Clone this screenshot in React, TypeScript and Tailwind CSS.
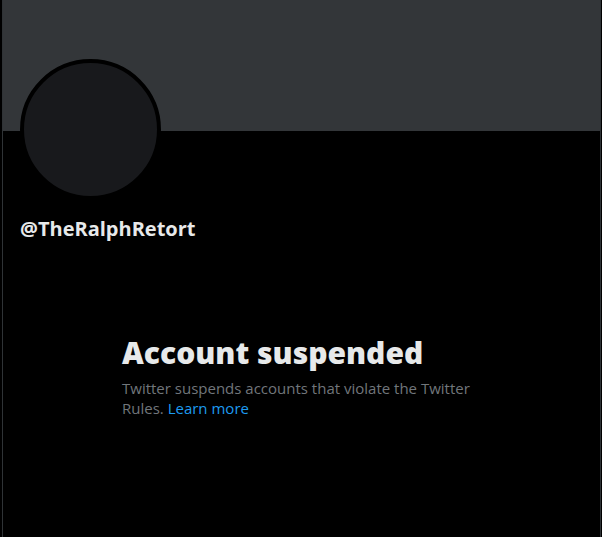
export default function App() {
  return (
    <div className="min-h-[537px] w-[602px] bg-black" style={{ fontFamily: '"Open Sans", "Liberation Sans", sans-serif' }}>
      <div className="ml-[2px] flex min-h-[537px] w-[599px] flex-col border-x border-[#2f3336]">
        <div className="h-[131px] bg-[#333639]" />
        <div className="px-[17px]">
          <div className="-mt-[72px] h-[141px] w-[141px] rounded-full border-4 border-black bg-[#18191c]" />
          <div className="mt-[17px] text-[20px] font-bold leading-[24px] text-[#e7e9ea]">@TheRalphRetort</div>
        </div>
        <div className="mt-[94px] ml-[119px] max-w-[370px]">
          <p className="text-[30px] font-extrabold leading-[36px] text-[#e7e9ea]">Account suspended</p>
          <p className="mt-[7px] text-[15px] leading-[20px] text-[#71767b]">
            Twitter suspends accounts that violate the Twitter Rules. <span className="text-[#1d9bf0]">Learn more</span>
          </p>
        </div>
      </div>
    </div>
  );
}
